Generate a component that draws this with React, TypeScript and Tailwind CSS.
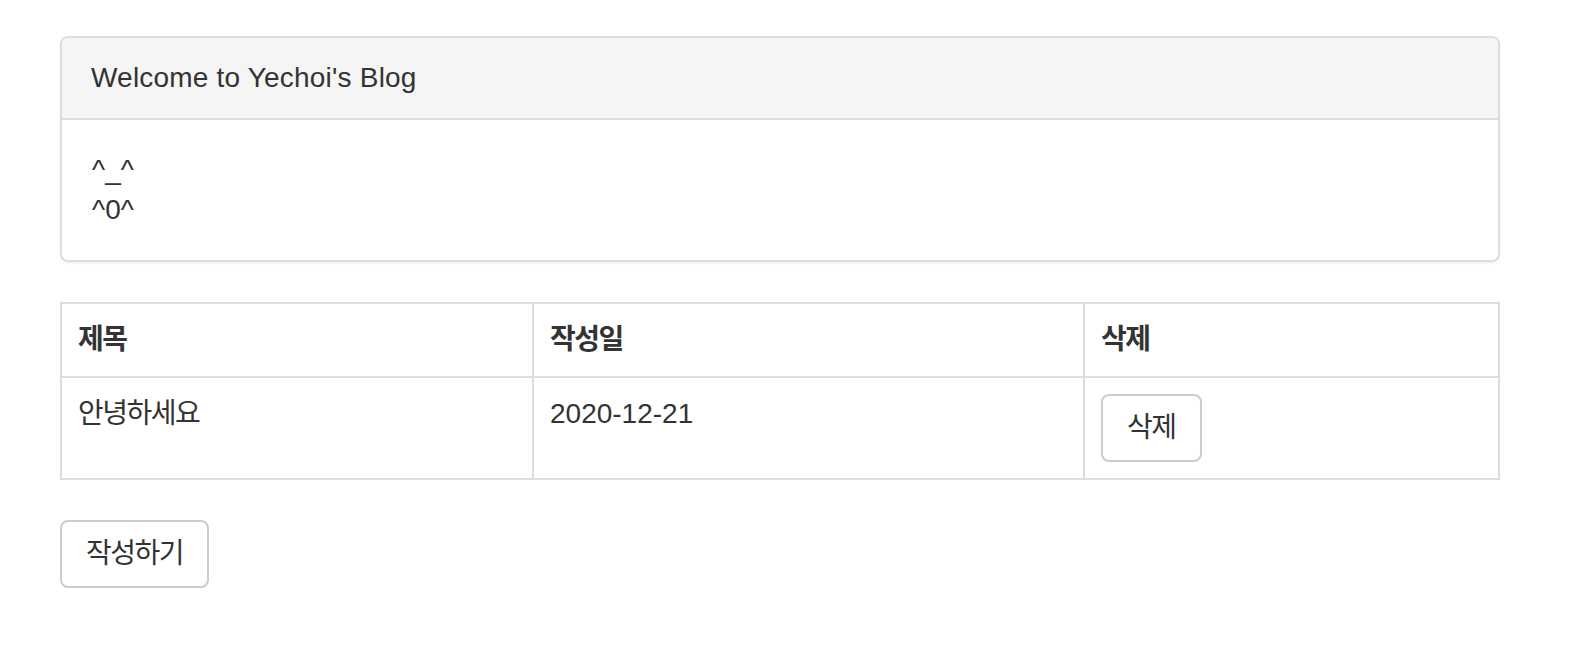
import React from "react";

const posts = [{ title: "안녕하세요", date: "2020-12-21" }];

export default function App() {
  return (
    <div
      className="min-h-[650px] bg-white pt-[36px] pl-[60px] text-[28px] leading-[40px] text-[#333]"
      style={{ fontFamily: "'Liberation Sans', 'Noto Sans CJK KR', sans-serif" }}
    >
      <div className="w-[1440px]">
        {/* Panel */}
        <div className="mb-[40px] rounded-[8px] border-2 border-[#ddd] bg-white shadow-[0_2px_2px_rgba(0,0,0,0.05)]">
          <div className="rounded-t-[6px] border-b-2 border-[#ddd] bg-[#f5f5f5] px-[29px] py-[20px] tracking-[0.2px]">
            Welcome to Yechoi's Blog
          </div>
          <div className="px-[30px] py-[30px]">
            <div>^_^</div>
            <div>^0^</div>
          </div>
        </div>

        {/* Posts table */}
        <table className="mb-[40px] w-full border-collapse">
          <colgroup>
            <col className="w-[472px]" />
            <col className="w-[551px]" />
            <col />
          </colgroup>
          <thead>
            <tr>
              <th className="border-2 border-[#ddd] p-[16px] text-left align-bottom font-bold tracking-[-1.5px]">제목</th>
              <th className="border-2 border-[#ddd] p-[16px] text-left align-bottom font-bold tracking-[-1.5px]">작성일</th>
              <th className="border-2 border-[#ddd] p-[16px] text-left align-bottom font-bold tracking-[-1.5px]">삭제</th>
            </tr>
          </thead>
          <tbody>
            {posts.map((p) => (
              <tr key={p.date}>
                <td className="border-2 border-[#ddd] p-[16px] align-top tracking-[-1.5px]">{p.title}</td>
                <td className="border-2 border-[#ddd] p-[16px] align-top">{p.date}</td>
                <td className="border-2 border-[#ddd] p-[16px] align-top">
                  <button className="rounded-[8px] border-2 border-[#ccc] bg-white px-[24px] py-[12px] leading-[40px] tracking-[-1.5px]">
                    삭제
                  </button>
                </td>
              </tr>
            ))}
          </tbody>
        </table>

        <button className="rounded-[8px] border-2 border-[#ccc] bg-white px-[24px] py-[12px] leading-[40px] tracking-[-1.5px]">
          작성하기
        </button>
      </div>
    </div>
  );
}
